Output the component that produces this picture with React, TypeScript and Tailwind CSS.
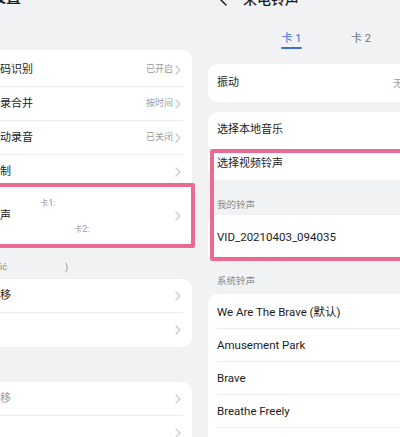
const font = { fontFamily: 'Roboto, "Noto Sans CJK SC", sans-serif' }

function Chevron() {
  return (
    <svg width="6" height="10" viewBox="0 0 6 10" fill="none" className="shrink-0">
      <path d="M1 1l4 4-4 4" stroke="#c9c9c9" strokeWidth="1.2" strokeLinecap="round" strokeLinejoin="round" />
    </svg>
  )
}

function LeftRow({ label, value, muted, last }: { label: string; value?: string; muted?: boolean; last?: boolean }) {
  return (
    <div className="flex h-[34px] items-center justify-between pl-[12px] pr-[11px] relative">
      <span className={muted ? "text-[11px] text-[#9a9a9a]" : "text-[11px] text-[#1c1c1c]"}>{label}</span>
      <div className="flex items-center gap-[2px]">
        {value && <span className="text-[9px] text-[#9b9b9b]">{value}</span>}
        <Chevron />
      </div>
      {!last && <div className="absolute bottom-0 left-[12px] right-[9px] h-px bg-[#efefef]" />}
    </div>
  )
}

function RightRow({ label, last }: { label: string; last?: boolean }) {
  return (
    <div className="relative flex h-[33px] items-center pl-[9px]">
      <span className="text-[11.5px] text-[#1c1c1c]">{label}</span>
      {!last && <div className="absolute bottom-0 left-[9px] right-0 h-px bg-[#efefef]" />}
    </div>
  )
}

export default function App() {
  return (
    <div className="relative flex h-[437px] w-[400px] overflow-hidden bg-[#f1f2f4]" style={font}>
      {/* left screen */}
      <div className="w-[200px] shrink-0">
        <div className="flex h-[50px] items-start">
          <div className="-ml-[9px] -mt-[10px] text-[15px] font-semibold leading-[15px] text-[#1c1c1c]">设置</div>
        </div>
        <div className="-ml-[12px] w-[204px] rounded-[10px] bg-white pt-[3px] pb-[2px]">
          <LeftRow label="码识别" value="已开启" />
          <LeftRow label="录合并" value="按时间" />
          <LeftRow label="动录音" value="已关闭" />
          <LeftRow label="制" />
          <div className="flex h-[54px] items-center justify-between pl-[12px] pr-[11px]">
            <div className="flex items-center">
              <span className="text-[11px] text-[#1c1c1c]">声</span>
              <div className="flex flex-col gap-[14px] text-[8.5px] leading-[12px] text-[#9b9b9b]">
                <span className="pl-[29px]">卡1:</span>
                <span className="pl-[63px]">卡2:</span>
              </div>
            </div>
            <Chevron />
          </div>
        </div>
        <div className="mt-[16px] mb-[6px] flex h-[12px] items-center text-[9px] leading-[12px] text-[#8a8a8a]">
          <span>ìć</span>
          <span className="ml-[58px]">)</span>
        </div>
        <div className="-ml-[12px] w-[204px] rounded-[10px] bg-white">
          <LeftRow label="移" />
          <LeftRow label="" last />
        </div>
        <div className="mt-[35px] -ml-[12px] w-[204px] rounded-[10px] bg-white">
          <LeftRow label="移" muted />
          <LeftRow label="" last />
        </div>
      </div>

      {/* right screen */}
      <div className="flex-1 pl-[8px]">
        <div className="-mt-[11px] flex h-[20px] items-center">
          <svg width="8" height="14" viewBox="0 0 8 14" fill="none" className="ml-[11px]">
            <path d="M7 1L1 7l6 6" stroke="#222" strokeWidth="1.5" strokeLinecap="round" strokeLinejoin="round" />
          </svg>
          <span className="ml-[16px] text-[14px] font-medium text-[#1c1c1c]">来电铃声</span>
        </div>
        <div className="mt-[23px] flex h-[17px] items-start">
          <div className="ml-[73px] flex flex-col items-center">
            <span className="text-[11px] leading-[14px] text-[#3a6fd6]">卡 1</span>
            <div className="mt-[1px] h-[2px] w-[21px] rounded-full bg-[#3a6fd6]" />
          </div>
          <span className="ml-[49px] text-[11px] leading-[14px] text-[#777]">卡 2</span>
        </div>
        <div className="mt-[15px] flex h-[38px] w-[212px] items-center justify-between rounded-[10px] bg-white pl-[9px] pr-[17px]">
          <span className="text-[11px] text-[#1c1c1c]">振动</span>
          <span className="text-[10px] text-[#9b9b9b]">无</span>
        </div>
        <div className="mt-[10px] w-[212px] rounded-[10px] bg-white">
          <div className="flex h-[36px] items-center pl-[9px]">
            <span className="text-[11px] text-[#1c1c1c]">选择本地音乐</span>
          </div>
          <div className="flex h-[32px] items-center pl-[9px]">
            <span className="text-[11px] text-[#1c1c1c]">选择视频铃声</span>
          </div>
        </div>
        <div className="pt-[19px] pb-[4px] pl-[9px] text-[9.5px] leading-[12px] text-[#8a8a8a]">我的铃声</div>
        <div className="flex h-[46px] w-[212px] items-center rounded-[10px] bg-white pl-[9px]">
          <span className="text-[11.5px] text-[#1c1c1c]">VID_20210403_094035</span>
        </div>
        <div className="pt-[14px] pb-[7px] pl-[9px] text-[9.5px] leading-[12px] text-[#8a8a8a]">系统铃声</div>
        <div className="w-[212px] rounded-[10px] bg-white pt-[2px]">
          <RightRow label="We Are The Brave (默认)" />
          <RightRow label="Amusement Park" />
          <RightRow label="Brave" />
          <RightRow label="Breathe Freely" />
          <RightRow label="" last />
        </div>
      </div>

      {/* annotation boxes */}
      <div className="absolute left-[-10px] top-[183px] h-[65px] w-[205px] rounded-[2px] border-[4px] border-[#e96b92]" />
      <div className="absolute left-[210px] top-[149px] h-[112px] w-[200px] rounded-[2px] border-[4px] border-[#e96b92]" />
    </div>
  )
}
